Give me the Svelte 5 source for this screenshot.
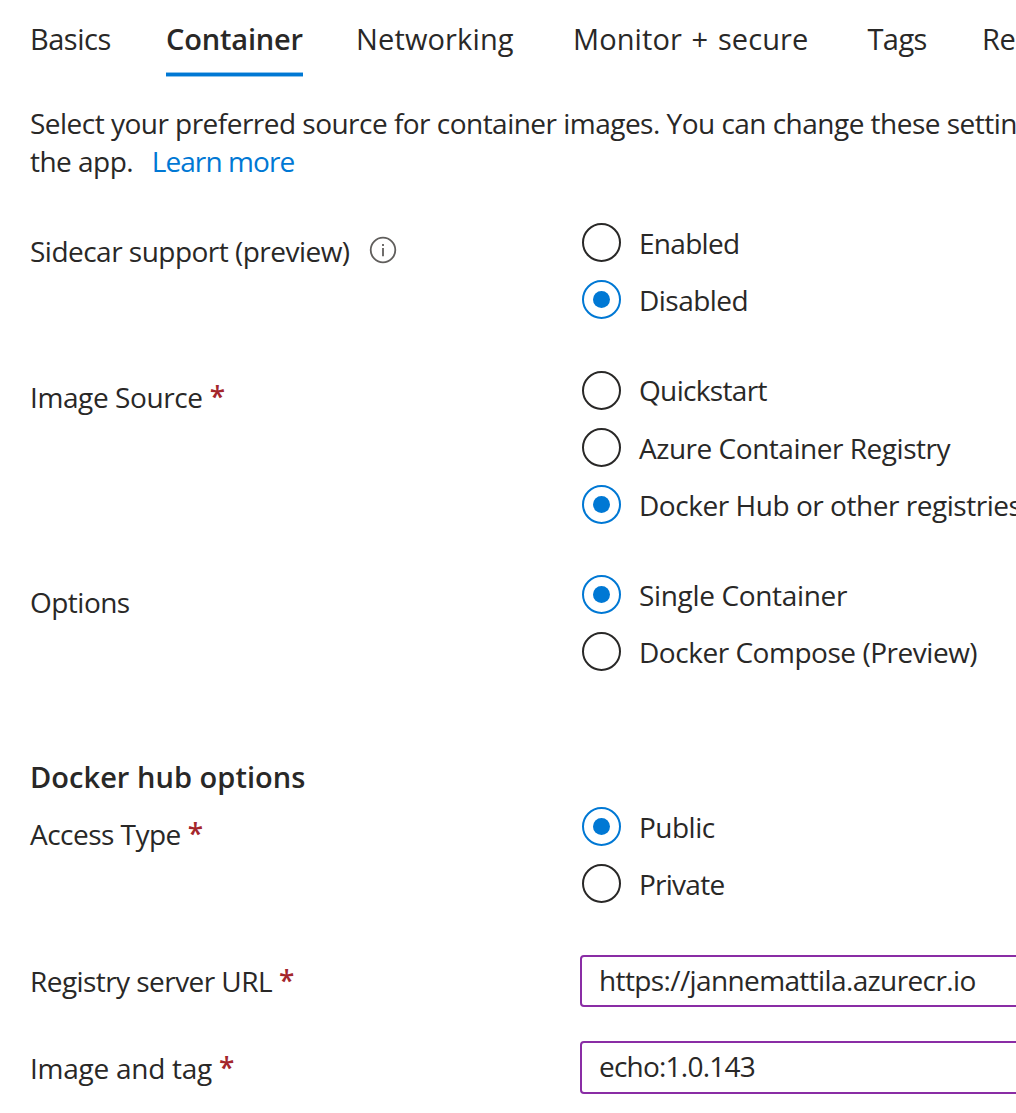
<script>
  const tabs = [
    { text: 'Basics', id: 'basics' },
    { text: 'Container', id: 'container', active: true },
    { text: 'Networking', id: 'networking' },
    { text: 'Monitor + secure', id: 'monitor' },
    { text: 'Tags', id: 'tags' },
    { text: 'Re', id: 'review' }
  ];

  const settings = [
    {
      id: 'sidecar', label: 'Sidecar support (preview)', info: true,
      options: [
        { text: 'Enabled', id: 'enabled' },
        { text: 'Disabled', id: 'disabled', checked: true }
      ]
    },
    {
      id: 'source', label: 'Image Source', required: true,
      options: [
        { text: 'Quickstart', id: 'quickstart' },
        { text: 'Azure Container Registry', id: 'acr' },
        { text: 'Docker Hub or other registries', id: 'hub', checked: true }
      ]
    },
    {
      id: 'options', label: 'Options',
      options: [
        { text: 'Single Container', id: 'single', checked: true },
        { text: 'Docker Compose (Preview)', id: 'compose' }
      ]
    }
  ];

  const access = {
    id: 'access', label: 'Access Type', required: true,
    options: [
      { text: 'Public', id: 'public', checked: true },
      { text: 'Private', id: 'private' }
    ]
  };

  const fields = [
    { id: 'registry', label: 'Registry server URL', value: 'https://jannemattila.azurecr.io' },
    { id: 'image', label: 'Image and tag', value: 'echo:1.0.143' }
  ];
</script>

{#snippet group(row)}
  <section class="row row-{row.id}">
    <div class="label label-{row.id}">
      <span>{row.label}</span>
      {#if row.required}<span class="star">*</span>{/if}
      {#if row.info}
        <svg class="info" viewBox="0 0 28 28">
          <circle cx="14" cy="14" r="12.3" />
          <path d="M14 12v8.3" />
          <path d="M14 8v2.1" />
        </svg>
      {/if}
    </div>
    <div class="choices">
      {#each row.options as option}
        <div class="choice">
          <span class="radio" class:checked={option.checked}></span>
          <span class="text text-{option.id}">{option.text}</span>
        </div>
      {/each}
    </div>
  </section>
{/snippet}

<main>
  <nav>
    {#each tabs as tab}
      <span class="tab tab-{tab.id}" class:active={tab.active}>{tab.text}</span>
    {/each}
  </nav>

  <p class="intro">
    <span class="line">Select your preferred source for container images. You can change these settin</span>
    <span class="line">the app.<a class="more" href="#learn">Learn more</a></span>
  </p>

  {#each settings as row}
    {@render group(row)}
  {/each}

  <h2>Docker hub options</h2>
  {@render group(access)}

  {#each fields as field}
    <section class="row row-{field.id}">
      <div class="label label-{field.id}"><span>{field.label}</span><span class="star">*</span></div>
      <div class="input input-{field.id}">{field.value}</div>
    </section>
  {/each}
</main>

<style>
  :global(body) { margin: 0; background: #fff; }

  main {
    box-sizing: border-box;
    width: 1016px;
    height: 1113px;
    padding: 19px 0 0 30px;
    overflow: hidden;
    background: #fff;
    color: #292827;
    font-family: 'Open Sans', 'Noto Sans', sans-serif;
    font-size: 28px;
    line-height: 38px;
    letter-spacing: -0.52px;
    white-space: nowrap;
  }

  nav { display: flex; height: 58px; font-size: 29px; line-height: 40px; }
  .tab { flex: none; box-sizing: border-box; height: 58px; }
  .tab-basics { width: 136px; letter-spacing: -0.5px; }
  .tab-container { width: 137px; margin-right: 53px; letter-spacing: -0.18px; }
  .tab-networking { width: 217px; letter-spacing: 0.14px; }
  .tab-monitor { width: 294.5px; letter-spacing: 0.1px; word-spacing: 2px; }
  .tab-tags { width: 114.5px; letter-spacing: -0.6px; }
  .tab-review { letter-spacing: -0.4px; }
  .active {
    font-weight: 600;
    background: linear-gradient(#8cc3ec 0 1px, #0078d4 1px 4px, #8cc3ec 4px) bottom / 100% 5px no-repeat;
  }

  .intro { margin: 27px 0 0; }
  .line { display: block; }
  .more { margin-left: 18.5px; color: #0078d4; letter-spacing: -0.9px; text-decoration: none; }

  .row { display: grid; grid-template-columns: 552px 1fr; }
  .row-sidecar { height: 147px; margin-top: 43px; }
  .row-source { height: 205px; }
  .row-source .choices { padding-top: 0.5px; gap: 18px; }
  .row-options { height: 182px; }
  .row-access { height: 148px; margin-top: 10px; }
  .row-registry { height: 86px; }

  .label { display: flex; padding-top: 8px; }
  .label-sidecar { padding-top: 9px; }
  .label-source { letter-spacing: -0.4px; }
  .label-registry { padding-top: 7px; letter-spacing: -0.56px; }
  .label-image { letter-spacing: -0.26px; }
  .star { margin: -1px 0 0 7px; color: #a4262c; font-weight: 600; }

  .info { width: 28px; height: 28px; margin: 4px 0 0 19px; fill: none; stroke: #605e5c; stroke-width: 1.8; }

  .choices { display: flex; flex-direction: column; gap: 18.33px; }
  .choice { display: flex; height: 39px; }
  .text { margin: 1px 0 0 18px; }
  .text-enabled { letter-spacing: -0.7px; }
  .text-quickstart { margin-top: 0; letter-spacing: -0.66px; }
  .text-acr { letter-spacing: -0.47px; }
  .text-hub { letter-spacing: -0.46px; }
  .text-compose { letter-spacing: -0.47px; }
  .text-single { letter-spacing: -0.34px; }
  .text-private { letter-spacing: -0.75px; }

  .radio {
    display: grid;
    place-items: center;
    box-sizing: border-box;
    width: 39px;
    height: 39px;
    border: 2px solid #292827;
    border-radius: 50%;
  }
  .radio.checked { border-color: #0078d4; }
  .radio.checked::after { content: ''; width: 17px; height: 17px; border-radius: 50%; background: #0078d4; }

  h2 { margin: 0; font-size: 29px; font-weight: 600; line-height: 40px; letter-spacing: 0.04px; }

  .input {
    box-sizing: border-box;
    height: 52px;
    margin: 0 -10px 0 -2px;
    padding: 4px 17px;
    border: 2px solid #8a2da5;
    border-radius: 4px;
    letter-spacing: -0.62px;
  }
  .input-image { height: 53px; letter-spacing: -0.78px; }
</style>
